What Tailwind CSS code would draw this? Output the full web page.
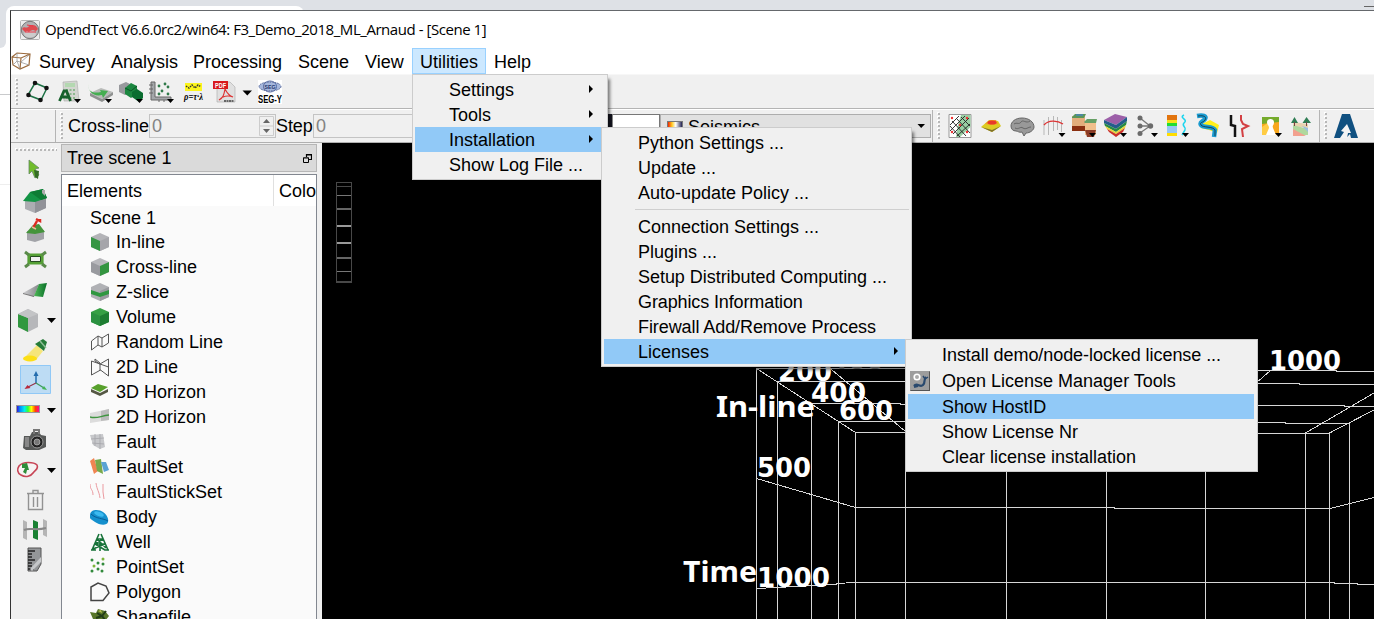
<!DOCTYPE html>
<html lang="en">
<head>
<meta charset="utf-8">
<title>OpendTect</title>
<script src="https://cdn.jsdelivr.net/npm/@tailwindcss/browser@4"></script>
</head>
<body class="w-[1374px] h-[619px] overflow-hidden bg-[#dee1e6] font-['Liberation_Sans',Arial,sans-serif] text-[18px] leading-[25px] text-black">
<svg class="absolute w-0 h-0">
  <defs>
    <pattern id="grip" width="4" height="4" patternUnits="userSpaceOnUse"><rect width="4" height="4" fill="#f0f0f0"/><rect x="0" y="0" width="2" height="2" fill="#fff"/><rect x="1" y="1" width="2" height="2" fill="#b8b8b8"/></pattern>
    <linearGradient id="rain"><stop offset="0" stop-color="#40c"/><stop offset=".15" stop-color="#08f"/><stop offset=".35" stop-color="#0ee"/><stop offset=".5" stop-color="#3f3"/><stop offset=".65" stop-color="#ff0"/><stop offset=".82" stop-color="#f40"/><stop offset="1" stop-color="#f0a"/></linearGradient>
    <linearGradient id="seis"><stop offset="0" stop-color="#e10"/><stop offset=".3" stop-color="#fc2"/><stop offset=".55" stop-color="#fff"/><stop offset="1" stop-color="#114"/></linearGradient>
    <linearGradient id="greens"><stop offset="0" stop-color="#50b858"/><stop offset="1" stop-color="#087028"/></linearGradient>
    <linearGradient id="grays"><stop offset="0" stop-color="#d0d0d2"/><stop offset="1" stop-color="#85868a"/></linearGradient>
  </defs>
</svg>

<div class="relative w-[1374px] h-[619px] overflow-hidden">
  <!-- browser behind the application window -->
  <div class="absolute left-0 top-[40px] w-[20px] h-[579px] bg-white"></div>
  <div class="absolute left-0 top-0 w-[6px] h-[48px] bg-[#dee1e6] rounded-br-lg"></div>
  <div class="absolute left-[6px] top-[6px] w-[298px] h-[60px] bg-white rounded-t-lg"></div>
  <div class="absolute left-0 top-[94px] w-[10px] h-px bg-[#c9cacc]"></div>
  <div class="absolute left-0 top-[184px] w-[10px] h-px bg-[#eee]"></div>
  <div class="absolute left-[1364px] top-[6px] w-[10px] h-px bg-[#666]"></div>

  <!-- application window -->
  <div class="absolute left-[10px] top-[10px] w-[1364px] h-[609px] border-l border-t border-l-[#333] border-t-[#65686c] bg-[#f0f0f0] flex flex-col">
    <!-- title bar -->
    <div class="h-[37px] shrink-0 bg-white flex items-center pl-[9px]">
      <svg class="w-5 h-5" viewBox="0 0 20 20"><rect x=".5" y=".5" width="19" height="19" rx="1" fill="#eee" stroke="#b5b5b5"/><circle cx="10" cy="10" r="8.700" fill="#b2b2b4" stroke="#777"/><ellipse cx="10" cy="14" rx="6" ry="3.500" fill="#ccc"/><path d="M2 9c2-4 4 0 6-2s5-3 8-1l2 3-2 2-3-1-3 1-1 1-2-1-2 1z" fill="#df4b50"/><path d="M5 12h11M7 5l6 1" stroke="#e34" fill="none"/></svg>
      <span class="ml-[5px] font-['Open_Sans','Noto_Sans',sans-serif] text-[15px] whitespace-nowrap tracking-[-0.45px]">OpendTect V6.6.0rc2/win64: F3_Demo_2018_ML_Arnaud - [Scene 1]</span>
    </div>
    <!-- menu bar -->
    <div class="h-[27px] shrink-0 bg-white flex items-stretch border-b border-[#f7f7f7] whitespace-nowrap">
      <svg class="w-[21px] h-[24px]" viewBox="0 0 21 24"><path d="M1 9 6 5l13 1-1 11-9 4-7-4zM1 9l9 1 9-4M10 10l-1 11" fill="none" stroke="#9b6a3c" stroke-width="1.200"/><path d="M6 5v8l3 8M6 13l-4 4M10 14l8-7M6 13l12 4" fill="none" stroke="#999" stroke-width=".8"/></svg>
      <span class="w-[72px] pl-[7px] pt-[2px]">Survey</span>
      <span class="w-[82px] pl-[7px] pt-[2px]">Analysis</span>
      <span class="w-[105px] pl-[7px] pt-[2px]">Processing</span>
      <span class="w-[67px] pl-[7px] pt-[2px]">Scene</span>
      <span class="w-[54px] pl-[7px] pt-[2px]">View</span>
      <span class="w-[74px] pl-[7px] pt-px bg-[#cce8ff] border border-[#99d1ff]">Utilities</span>
      <span class="pl-[8px] pt-[2px]">Help</span>
    </div>
    <!-- main toolbar -->
    <div class="h-[34px] shrink-0 flex items-center border-b border-[#b4b4b4]">
      <svg class="w-[11px] h-[28px] shrink-0"><rect x="4" y="0" width="4" height="28" fill="url(#grip)"/></svg>
      <svg class="w-[31px] h-[26px]" viewBox="0 0 31 26"><path d="m13 4 12 5-6 12-13-5z" fill="none" stroke="#1d7145" stroke-width="1.500"/><g fill="#111"><circle cx="13" cy="4" r="2.300"/><circle cx="24.500" cy="9" r="2.300"/><circle cx="18.500" cy="21" r="2.300"/><circle cx="6.500" cy="16" r="2.300"/></g></svg>
      <svg class="w-[31px] h-[26px]" viewBox="0 0 31 26"><path d="m10 3 14-1 2 20H11z" fill="#d3d6d0" stroke="#aaa" stroke-width=".6"/><path d="M12 4h10v4H12z" fill="#b4d8b1"/><path d="M13 11h10M13 15h10M13 19h10" stroke="#8cb88e" stroke-width="2.200" stroke-dasharray="2 1.500"/><path d="M6.500 22 11 12h2.500l4 10M9 18h7" fill="none" stroke="#16612c" stroke-width="2.800"/><path d="M21 20h7l-3.500 4z"/></svg>
      <svg class="w-[31px] h-[26px]" viewBox="0 0 31 26"><path d="m6 14 11-5 12 4-11 7z" fill="#b9bbb9"/><path d="m6 14 12 6v3L6 17zM18 20l11-7v3l-11 7z" fill="#8f9190"/><path d="M4 5c0 7 4 10 13 8l-1-2 8 1-5 7-1-3C9 18 4 12 4 5z" fill="#45ae51"/><path d="M21 20h7l-3.500 4z"/></svg>
      <svg class="w-[31px] h-[26px]" viewBox="0 0 31 26"><path d="m4 6 7-3 6 3v7l-7 3-6-3z" fill="#98999d"/><path d="m10 9 6-5 6 3v8l-6 4-6-4z" fill="#1b8740"/><path d="m17 13 5-3 6 4v5l-4 4-7-5z" fill="#0a6d30"/><path d="m10 9 6 3 6-5" stroke="#0a5524" fill="none"/><path d="M21 20h7l-3.500 4z"/></svg>
      <svg class="w-[31px] h-[26px]" viewBox="0 0 31 26"><path d="M5 3v18h20v-3H9V3z" fill="#a4a7aa" stroke="#666"/><path d="M3 6h4M3 10h4M3 14h4M13 21v2M18 21v2" stroke="#666"/><g fill="#307a4a"><circle cx="13" cy="7" r="1.400"/><circle cx="19" cy="5" r="1.400"/><circle cx="22" cy="8" r="1.400"/><circle cx="16" cy="12" r="1.400"/><circle cx="13" cy="15" r="1.400"/><circle cx="22" cy="15" r="1.400"/></g><path d="M21 20h7l-3.500 4z"/></svg>
      <svg class="w-[31px] h-[26px]" viewBox="0 0 31 26"><path d="M8 4h17v8H8z" fill="#fcf51c"/><path d="m9 7 3 2 3-3 3 3 3-3 3 2" stroke="#333" stroke-dasharray="1.500 1" fill="none" stroke-width="1.500"/><text x="7" y="21" font-family="Liberation Serif" font-weight="bold" font-style="italic" font-size="10" textLength="19" lengthAdjust="spacingAndGlyphs">ρ=τ·λ</text></svg>
      <svg class="w-[31px] h-[26px]" viewBox="0 0 31 26"><path d="M9 3h13l5 5v15H9z" fill="#e0e0e0" stroke="#aaa" stroke-width=".6"/><path d="M5 2h15v8H5z" fill="#d8191d"/><text x="7" y="8.500" font-size="6.500" font-weight="bold" font-family="Liberation Sans" fill="#fff" textLength="11" lengthAdjust="spacingAndGlyphs">PDF</text><path d="M17 10c-1 6-2 9-6 11 3-4 9-5 14-3-3-1-6-4-8-8z" fill="none" stroke="#d33" stroke-width="1.200"/><path d="M16 22h10" stroke="#666" stroke-width="2" stroke-dasharray="2 .5"/></svg>
      <svg class="w-[16px] h-[26px]" viewBox="0 0 16 26"><path d="M3.500 11.500h9.500l-4.700 5z"/></svg>
      <svg class="w-[31px] h-[26px]" viewBox="0 0 31 26"><path d="M3 1h24v24H3z" fill="#fff"/><ellipse cx="15" cy="7.500" rx="11" ry="4.500" fill="#a6b7dc" stroke="#46598f" stroke-dasharray="1.500 1"/><ellipse cx="15" cy="7.500" rx="6.500" ry="5.500" fill="none" stroke="#5468a0"/><text x="9.500" y="10" font-size="6" font-weight="bold" fill="#23366e" font-family="Liberation Sans" textLength="11" lengthAdjust="spacingAndGlyphs">SEG</text><text x="3" y="23.500" font-size="10.500" font-weight="bold" font-family="Liberation Sans" textLength="24" lengthAdjust="spacingAndGlyphs">SEG-Y</text></svg>
    </div>
    <!-- slice position, attribute and plugin toolbars -->
    <div class="h-[34px] shrink-0 flex items-center border-t border-t-white border-b border-b-[#b0b0b0] whitespace-nowrap">
      <svg class="w-[44px] h-[28px] shrink-0"><rect x="4" y="0" width="4" height="28" fill="url(#grip)"/></svg>
      <div class="w-px h-full bg-[#b4b4b4]"></div>
      <svg class="w-[12px] h-[28px] shrink-0"><rect x="4" y="0" width="4" height="28" fill="url(#grip)"/></svg>
      <span class="w-[81px] shrink-0">Cross-line</span>
      <div class="w-[127px] h-[24px] shrink-0 border border-[#c4c4c4] flex items-center pl-[2px] pt-px text-[#838383]">0
        <svg class="ml-auto -mt-px w-[16px] h-[22px]" viewBox="0 0 16 22"><path d="M.5 1.500h14v19H.5zM0 11h15" fill="none" stroke="#ccc"/><path d="M4 8h7l-3.500-4zM4 14h7l-3.500 4z" fill="#666"/></svg>
      </div>
      <span class="w-[37px] shrink-0 tracking-[-0.1px]">Step</span>
      <div class="w-[127px] h-[24px] shrink-0 border border-[#c4c4c4] flex items-center pl-[2px] pt-px text-[#838383]">0</div>
      <div class="ml-[168px] w-[5px] h-[24px] bg-[#14151f] border-r border-[#888]"></div>
      <div class="w-[47px] h-[24px] bg-white border-t border-r border-[#777]"></div>
      <div class="w-[271px] h-[24px] bg-[#e1e1e1] border border-[#adadad] flex items-center pl-[6px]">
        <svg class="w-[16px] h-[11px]"><rect x=".5" y=".5" width="15" height="10" fill="url(#seis)" stroke="#777"/></svg>
        <span class="pl-[5px] pt-[2px]">Seismics</span>
        <svg class="ml-auto w-[14px] h-[10px]" viewBox="0 0 14 10"><path d="M1.500 3H9L5.200 7z"/></svg>
      </div>
      <div class="w-px h-full ml-[1px] bg-[#b4b4b4]"></div>
      <svg class="w-[12px] h-[28px] shrink-0"><rect x="4" y="0" width="4" height="28" fill="url(#grip)"/></svg>
      <svg class="w-[31px] h-[26px]" viewBox="0 0 31 26"><path d="M4 1.500h22v23H4z" fill="#fff" stroke="#999"/><path d="m16 2 9.500 0v12L15 24h-4l2-12z" fill="#99cfa3"/><path d="m5 13 10 11M7 8l14 15M12 6l13 14M16 4l9 9M5 18 20 3M8 21 24 5M12 23 25 11M5 12l9-9" stroke="#222" stroke-width=".9"/><g fill="#e33"><circle cx="7" cy="5" r="1.200"/><circle cx="22" cy="5" r="1.200"/><circle cx="15" cy="12" r="1.200"/><circle cx="7" cy="19" r="1.200"/><circle cx="22" cy="19" r="1.200"/></g></svg>
      <svg class="w-[31px] h-[26px]" viewBox="0 0 31 26"><path d="m5 14 8-7 9 1 3 5-9 6z" fill="#dccd22"/><path d="m5 14 11 3 9-4-9 6z" fill="#80722a"/><path d="m9 11 5-4h6l2 4-6 1z" fill="#f29a25"/><ellipse cx="16" cy="9.500" rx="4.500" ry="2" fill="#e8392a"/></svg>
      <svg class="w-[31px] h-[26px]" viewBox="0 0 31 26"><path d="M4 13c0-4 4-8 11-8s12 4 12 9c0 3-4 6-8 6l-2 3-2-4c-3 1-4-1-6-1-3 0-5-2-5-5z" fill="#999" stroke="#666"/><path d="M7 11c3-2 5 1 7-2s5 2 9-1M8 15c4 2 5-2 8 0s5-1 8-1" stroke="#666" fill="none"/></svg>
      <svg class="w-[31px] h-[26px]" viewBox="0 0 31 26"><path d="M6 7v15M10.500 4v18M15.500 3v15M19.500 4v13M23.500 7v12" stroke="#b7b7b7"/><path d="M6 12c4-5 13-5 19-1" stroke="#d33" stroke-width="1.400" fill="none"/><path d="M20.500 20h7L24 24z"/></svg>
      <svg class="w-[31px] h-[26px]" viewBox="0 0 31 26"><path d="M3 3h13v15H3z" fill="#e2ad7b"/><path d="M3 4l3-3h11l-2 4H3z" fill="#5a9558"/><path d="M7 2h7" stroke="#4a84b8" stroke-width="1.500"/><path d="M3 13h13v5H3z" fill="#8a2f10"/><path d="M16 9h11v13H16z" fill="#f1bf8b"/><path d="m15 9 3-3h10l-1 4H16z" fill="#66a065"/><path d="M16 17h11l-2 7h-7z" fill="#8b3b26"/><path d="M20 20h7l-3.500 4z"/></svg>
      <svg class="w-[31px] h-[26px]" viewBox="0 0 31 26"><path d="M4 7 15 1l12 3-11 8z" fill="#9c5fa8"/><path d="m4 7 12 5 11-8v4l-11 8L4 10z" fill="#245c8c"/><path d="m4 10 12 6 11-8-1 4-10 7L5 13z" fill="#268a45"/><path d="m5 13 11 6 10-7-1 3-9 6L7 16z" fill="#e6d63b"/><path d="m7 16 9 5 9-6-2 4-7 5-7-5z" fill="#cb3029"/><path d="M20 20h7l-3.500 4z"/></svg>
      <svg class="w-[31px] h-[26px]" viewBox="0 0 31 26"><path d="m9 5 10 8-10 7M9 13h10" fill="none" stroke="#777" stroke-width="1.300"/><g fill="#6b6b6b"><circle cx="9" cy="5" r="2.500"/><circle cx="9" cy="13" r="2.500"/><circle cx="9" cy="20.500" r="2.500"/><circle cx="19.500" cy="13" r="2.700"/></g><path d="M20 20h7l-3.500 4z"/></svg>
      <svg class="w-[31px] h-[26px]" viewBox="0 0 31 26"><path d="M5 2h10v5H5z" fill="#e2740e"/><path d="M5 7h10v3H5z" fill="#f5e21a"/><path d="M5 10h10v3H5z" fill="#21dd32"/><path d="M5 13h10v7H5z" fill="#95c7f3"/><path d="M5 20h10v3H5z" fill="#fd0"/><path d="M22 2c-6 3 5 4 0 8-3 3 3 4 1 7l-3 5" stroke="#1cd5ee" stroke-width="1.500" fill="none"/><path d="M20 20h7l-3.500 4z"/></svg>
      <svg class="w-[31px] h-[26px]" viewBox="0 0 31 26"><path d="m7 12 10-5 9 5-2 8-8-3-8-2z" fill="#fff01c"/><path d="M4 3c6-1 10 0 8 3s-6 3-4 6 12 1 14 5l-1 7" fill="none" stroke="#1a9bd0" stroke-width="4.500"/><path d="M5 3c6-1 9 1 7 4s-6 2-4 5 12 1 14 5v6" fill="none" stroke="#154257"/></svg>
      <svg class="w-[31px] h-[26px]" viewBox="0 0 31 26"><path d="M7 2v10l4 1v11" fill="none" stroke="#111" stroke-width="2.500"/><path d="M17 2v5l2 4 5 2-6 3 1 8" fill="none" stroke="#d34043" stroke-width="2"/></svg>
      <svg class="w-[31px] h-[26px]" viewBox="0 0 31 26"><path d="M7 4h17v16H7z" fill="#75ab2c"/><path d="m7 11 17-2v13H7z" fill="#f7a71d"/><path d="M7 14 17 7v15H7z" fill="#fc4"/><path d="M12 9c0-4 7-4 7 0s-2 3-1 6l3 7H11l3-7c0-3-2-3-2-6z" fill="#fff"/><path d="M20 20h7l-3.500 4z"/></svg>
      <svg class="w-[31px] h-[26px]" viewBox="0 0 31 26"><path d="m7 9 15 2v4L7 13z" fill="#e8d3b0"/><path d="m7 12 15 4v6H7z" fill="#b0d89e"/><path d="m7 16 13 7H7z" fill="#f2a18f"/><path d="m16 13 6 2v4z" fill="#9bc0e0"/><path d="M8.500 4 5 10h7zM20.500 4l-4 6H25z" fill="#2f7d54"/><path d="M8.500 9v4M20.500 9v4" stroke="#744"/></svg>
      <div class="w-px h-full ml-[2px] bg-[#b4b4b4]"></div>
      <svg class="w-[12px] h-[28px] shrink-0"><rect x="3" y="0" width="4" height="28" fill="url(#grip)"/></svg>
      <svg class="w-[28px] h-[26px] shrink-0" viewBox="0 0 28 26"><path d="M2 25 10 1h8l8 24h-7l-1-4-3 3-7 1z" fill="#105080"/><path d="m15 11 4 9h-3l-1 5H8l4-6-3-1z" fill="#f4f4f4"/></svg>
    </div>

    <!-- work area -->
    <div class="flex-1 min-h-0 flex">
      <!-- scene tools -->
      <div class="w-[50px] shrink-0 flex flex-col pl-[4px] pt-px">
        <svg class="w-[42px] h-[11px] shrink-0"><rect x="0" y="4" width="42" height="4" fill="url(#grip)"/></svg>
        <svg class="w-[44px] h-[30px] shrink-0" viewBox="0 0 44 30"><path d="m14 5 10 8-4 1 4 6-4 3-3-7-3 3z" fill="#71bd2b" stroke="#686" stroke-width=".8"/><path d="m19 15 5 1-1 8-3-2z" fill="#356d24"/></svg>
        <svg class="w-[44px] h-[30px] shrink-0" viewBox="0 0 44 30"><path d="M10 14v10l10 4 11-5V12z" fill="#acadb2"/><path d="m20 16 11-4v11l-11 5z" fill="#919298"/><path d="m8 16 7-9 13-3 4 9-12 4z" fill="#149445"/><path d="m15 7 13-3 4 9-6 2z" fill="#0d7c34"/><path d="M27 5h3v6l-3-3z" fill="#aaa"/></svg>
        <svg class="w-[44px] h-[30px] shrink-0" viewBox="0 0 44 30"><path d="M12 16v9l8 2 9-3v-9z" fill="#a2a3a8"/><path d="m11 18 7-8 6-1 6 8-10 2z" fill="#44943b"/><path d="m18 13 4-7M21 4l4 2v-2" stroke="#dc2a20" stroke-width="2.500" fill="none"/><path d="m17 12 4 2" stroke="#eb9" stroke-width="1.500"/></svg>
        <svg class="w-[44px] h-[30px] shrink-0" viewBox="0 0 44 30"><path d="M14 10h13v8H14z" fill="#f0f0f0" stroke="#55a035" stroke-width="3.200"/><path d="m10 7 4 3M31 7l-4 3M10 22l4-3M31 22l-4-3" stroke="#5a8a4a" stroke-width="3"/><path d="M15.500 11.500h10v5h-10z" fill="none" stroke="#264d22"/></svg>
        <svg class="w-[44px] h-[30px] shrink-0" viewBox="0 0 44 30"><path d="M8 18 24 9l-5 13z" fill="url(#grays)"/><path d="m24 9 8-1-4 14-9-1z" fill="url(#greens)"/><path d="m8 18 11 3v1L8 19z" fill="#777"/></svg>
        <svg class="w-[44px] h-[30px] shrink-0" viewBox="0 0 44 30"><path d="m3 9 10-5 10 5v13l-10 5-10-5z" fill="#b6b7ba"/><path d="m3 9 10 4v14L3 22z" fill="#31983f"/><path d="m3 9 10-5 10 5-10 4z" fill="#c3c4c6"/><path d="M32 13h9l-4.500 5z"/></svg>
        <svg class="w-[44px] h-[30px] shrink-0" viewBox="0 0 44 30"><path d="m22 10 6 6-7 9-12-2z" fill="#f5e57b"/><ellipse cx="15" cy="23.500" rx="7" ry="3" fill="#fcdf17"/><path d="m20 9 8-5 4 3-3 9z" fill="#257b38"/><path d="m25 6 6 7" stroke="#8cbe95" stroke-width="1.500"/></svg>
        <svg class="w-[44px] h-[30px] shrink-0" viewBox="0 0 44 30"><path d="M5.500.5h30v28h-30z" fill="#bddcf4" stroke="#90c8f6"/><path d="M21 18V8" stroke="#236cad" stroke-width="1.500"/><path d="m18.500 11 2.500-5 2.500 5z" fill="#236cad"/><path d="m21 18-8 4" stroke="#963045" stroke-width="1.200"/><path d="m9.500 24 3-4 3 3z" fill="#b9283a"/><path d="m21 18 8 5" stroke="#3a9a5b" stroke-width="1.200"/><path d="m32 25-5-1 2-3z" fill="#43b557"/></svg>
        <svg class="w-[44px] h-[30px] shrink-0" viewBox="0 0 44 30"><rect x="1.500" y="10.500" width="23" height="7" fill="url(#rain)" stroke="#999"/><path d="M32 13h9l-4.500 5z"/></svg>
        <svg class="w-[44px] h-[30px] shrink-0" viewBox="0 0 44 30"><path d="M9 11h6l2-4h7l2 3 5 1v11l-7 3H11l-3-2z" fill="#575958"/><path d="M19 9V5h5v4" stroke="#777" fill="none" stroke-width="2"/><path d="M10 12h4v10h-4z" fill="#888"/><circle cx="22" cy="17" r="6" fill="#222" stroke="#999"/><circle cx="22" cy="17" r="3" fill="#777" stroke="#bbb" stroke-width=".7"/></svg>
        <svg class="w-[44px] h-[30px] shrink-0" viewBox="0 0 44 30"><path d="M4 11c4-5 15-4 18-1 2 4-2 5-4 8s-7 5-12 2c-4-2-4-6-2-9z" fill="#f6f3f3" stroke="#c74455" stroke-width="1.600"/><path d="m7 9 5-1 2 7-2 0-1 4-3-2 2-4-3-0z" fill="#2e8d39"/><path d="M32 13h9l-4.500 5z"/></svg>
        <svg class="w-[44px] h-[30px] shrink-0" viewBox="0 0 44 30"><path d="M13.500 9v15.500h14V9M12 8.500h17M18 8V5.500h5V8M18.500 12v10M22.500 12v10" fill="none" stroke="#929292" stroke-width="1.400"/></svg>
        <svg class="w-[44px] h-[30px] shrink-0" viewBox="0 0 44 30"><path d="m8 5 4 2v18l-4-2zM28 4l4 2v16l-4-2z" fill="#b5b5b5"/><path d="m18 5 5 2v18l-5-2z" fill="#198132"/><path d="M9 15c6-3 11 1 22-2" fill="none" stroke="#888" stroke-width="2"/></svg>
        <svg class="w-[44px] h-[30px] shrink-0" viewBox="0 0 44 30"><path d="M13 3h13v16l-4 7h-9z" fill="#949698" stroke="#555"/><path d="M13 6h7M13 9h4M13 12h4M13 15h7M13 18h4M13 21h4M13 24h6" stroke="#222" stroke-width="1.300"/><path d="m15 24 11-12v5l-9 9z" fill="#c5c7c9"/></svg>
      </div>

      <!-- tree -->
      <div class="w-[261px] shrink-0 flex flex-col pt-px">
        <div class="w-[256px] h-[28px] shrink-0 bg-[#dadada] border border-[#b6b6b6] flex items-center pl-[5px] pr-[4px] pt-px">Tree scene 1
          <svg class="ml-auto w-[9px] h-[10px]" viewBox="0 0 9 10"><path d="M3.500 3V.5h5v5H6M3 1h6M0 4h6" fill="none" stroke="#000" stroke-width="1.200"/><path d="M.5 4h5v4.500h-5z" fill="#ddd" stroke="#000"/></svg>
        </div>
        <div class="mt-[2px] w-[256px] flex-1 min-h-0 overflow-hidden border border-b-0 border-[#828790] bg-[#fafafa] whitespace-nowrap">
          <div class="h-[31px] bg-white flex items-center">
            <span class="w-[211px] pl-[5px] pt-[2px]">Elements</span>
            <span class="flex-1 h-full border-l border-[#e0e0e0] pl-[5px] leading-[33px] overflow-hidden">Color</span>
          </div>
          <div class="pl-[28px] h-[23px] leading-[24px]">Scene 1</div>
          <div class="[&>div]:h-[25px] [&>div]:flex [&>div]:items-center [&>div]:gap-[6px] [&>div]:pl-[28px] [&>div]:pt-[2px] [&_svg]:-mt-[2px]">
            <div><svg class="w-5 h-5" viewBox="0 0 20 20"><path d="m1 5 9-4 9 4v10l-9 4-9-4z" fill="#b3b3b7"/><path d="m1 5 9 4v10l-9-4z" fill="#359643"/><path d="m10 9 9-4v10l-9 4z" fill="#a5a5aa"/></svg>In-line</div>
            <div><svg class="w-5 h-5" viewBox="0 0 20 20"><path d="m1 5 9-4 9 4v10l-9 4-9-4z" fill="#b8b8bc"/><path d="m1 5 9 4v10l-9-4z" fill="#999a9f"/><path d="m10 9 9-4v10l-9 4z" fill="#349540"/></svg>Cross-line</div>
            <div><svg class="w-5 h-5" viewBox="0 0 20 20"><path d="m1 5 9-4 9 4v10l-9 4-9-4z" fill="#b0b1b5"/><path d="m10 9 9-4v10l-9 4z" fill="#999a9f"/><path d="m1 8 9 3 9-3v4l-9 3-9-3z" fill="#2f9740"/></svg>Z-slice</div>
            <div><svg class="w-5 h-5" viewBox="0 0 20 20"><path d="m1 5 9-4 9 4v10l-9 4-9-4z" fill="#36a044"/><path d="m10 9 9-4v10l-9 4z" fill="#1d7d31"/><path d="m1 5 9 4v10l-9-4z" fill="#2b9140"/></svg>Volume</div>
            <div><svg class="w-5 h-5" viewBox="0 0 20 20"><path d="M1.500 9 8 4l4 2 6.500-4v9L12 15l-4-2-6.500 5zM8 4v9M12 6v9" fill="none" stroke="#555"/></svg>Random Line</div>
            <div><svg class="w-5 h-5" viewBox="0 0 20 20"><path d="m1.500 4 17 6v9l-8-6-9 5zM10 7l8.500-5v9M5 4l5 3v7M5 4V2l5 4" fill="none" stroke="#555"/></svg>2D Line</div>
            <div><svg class="w-5 h-5" viewBox="0 0 20 20"><path d="m1 7 9 4 8-4v3l-8 4-9-4z" fill="#555744"/><path d="m1 6 7-4 10 3-8 5z" fill="#57a02c"/></svg>3D Horizon</div>
            <div><svg class="w-5 h-5" viewBox="0 0 20 20"><path d="m0 6 19-4v11L0 16z" fill="#dcdcdc"/><path d="m11 4 8-2v11l-8 1z" fill="#bcbcbc"/><path d="M0 10c7 2 10-1 19-2" fill="none" stroke="#409541" stroke-width="1.400"/></svg>2D Horizon</div>
            <div><svg class="w-5 h-5" viewBox="0 0 20 20"><path d="m0 3 13-1 2 13-5 2-7-4z" fill="#c7c8cb"/><path d="M5 2v12M10 2v15M1 7l13-1M2 11l12 1" stroke="#a5a5aa" stroke-width=".8"/></svg>Fault</div>
            <div><svg class="w-5 h-5" viewBox="0 0 20 20"><path d="m0 4 4-3 4 13-4 3z" fill="#f08552"/><path d="m5 3 6-1 2 15-6-3z" fill="#78a94b"/><path d="m11 5 5 0 3 8-5 2z" fill="#5aa2d4"/></svg>FaultSet</div>
            <div><svg class="w-5 h-5" viewBox="0 0 20 20"><path d="M0 2c0 6 3 5 3 11M6 1c1 7 3 8 4 15M13 2v8l1 7" fill="none" stroke="#eb9aa0"/></svg>FaultStickSet</div>
            <div><svg class="w-5 h-5" viewBox="0 0 20 20"><path d="M0 8c1-7 10-5 13-3s6 6 5 10-9 3-13 0-6-3-5-7z" fill="#1590cd"/><path d="M1 7c5 5 12 4 17 7" stroke="#085e99" fill="none"/><ellipse cx="9" cy="7" rx="5" ry="2" transform="rotate(20 9 7)" fill="#3cbaf0"/></svg>Body</div>
            <div><svg class="w-5 h-5" viewBox="0 0 20 20"><path d="M9 2 2 18M11 2l7 16M7 7h6M5 12h10l-12 5M7 7l9 9M13 7 5 12l10 6M10 10v9M1 18h5M14 18h5" fill="none" stroke="#18733a" stroke-width="1.600"/></svg>Well</div>
            <div><svg class="w-5 h-5" viewBox="0 0 20 20"><g fill="#318a3c"><circle cx="2" cy="3" r="1.500"/><circle cx="8" cy="6" r="1.500"/><circle cx="13" cy="2" r="1.500" fill="#7bb53a"/><circle cx="13" cy="7" r="1.500"/><circle cx="4" cy="9" r="1.500" fill="#7bb53a"/><circle cx="8" cy="12" r="1.500"/><circle cx="2" cy="14" r="1.500"/><circle cx="12" cy="14" r="1.500"/></g></svg>PointSet</div>
            <div><svg class="w-5 h-5" viewBox="0 0 20 20"><path d="M1 18.500V5L8 1l8 3 3 7-6 7.500z" fill="none" stroke="#444" stroke-width="1.500"/></svg>Polygon</div>
            <div><svg class="w-5 h-5" viewBox="0 0 20 20"><path d="m0 5 6 1 2-4 7 2 4 5-4 5-6 3-6-5z" fill="#587628"/><path d="m7 6 5 3 4-5M6 11l6-2 3 4" stroke="#223d17" stroke-width="2" fill="none"/><path d="m8 4 3-1 1 3" fill="#bcc34e"/></svg>Shapefile</div>
          </div>
        </div>
      </div>

      <!-- 3D scene -->
      <svg class="w-[1052px] h-[476px] shrink-0 bg-black" viewBox="322 143 1052 476">
        <g fill="none" stroke="#484848" shape-rendering="crispEdges">
          <path d="M336.500 182.500h15v100h-15zM337 186.500h14M337 281.500h14"/>
          <path stroke="#777" d="M337 195.500h14M337 271.500h14"/>
          <path stroke="#666" stroke-width="2" d="M337 209h14M337 258h14"/>
          <path stroke="#999" stroke-width="2" d="M337 225.500h14M337 242.500h14"/>
        </g>
        <g fill="none" stroke="#d6d6d6" stroke-width="1" shape-rendering="crispEdges">
          <path d="M756.500 368v251M777.500 381v238M811.500 403v216M838.500 421v198M855.500 432v187M905.500 432v187M1006.500 433v186M1106.500 433v186M1205.500 433v186M1305.500 433v186M1329.500 433v186M1349.500 423v196"/>
          <path d="M756.500 368.500H905M1258 370.500h78v1h38M777 381.500H905M1258 383.500h41v1h75M811 403.500h89v1h5M1258 405.500h86v1h30M838 421.500h67M1258 422.500h27v1h64M855 432.500h50M1258 433.500h71"/>
          <path d="m756.500 368.500 99 64M831.500 369.500l74 62M1258.500 381 1271 370M1305.500 433l68.500-40M1329.500 433l44.500-23"/>
          <path d="m756.500 478.500 99 29H1114v1h216l44-11M756.500 588.500l79.500-4v-1l19.500-1H1334v1h23v1h17"/>
        </g>
        <g fill="#fff" font-family="DejaVu Sans, Verdana, sans-serif" font-weight="bold" font-size="27">
          <text x="830" y="369" textLength="54" lengthAdjust="spacingAndGlyphs" fill="#888">400</text>
          <text x="778" y="380.500" textLength="54" lengthAdjust="spacingAndGlyphs">200</text>
          <text x="811" y="402" textLength="55" lengthAdjust="spacingAndGlyphs">400</text>
          <text x="839" y="420" textLength="54" lengthAdjust="spacingAndGlyphs">600</text>
          <text x="716" y="416.500" font-size="28" font-family="Noto Sans, sans-serif" textLength="99" lengthAdjust="spacingAndGlyphs">In-line</text>
          <text x="757" y="477" textLength="54" lengthAdjust="spacingAndGlyphs">500</text>
          <text x="683" y="582" font-size="28" font-family="Noto Sans, sans-serif" textLength="74" lengthAdjust="spacingAndGlyphs">Time</text>
          <text x="757" y="587" textLength="73" lengthAdjust="spacingAndGlyphs">1000</text>
          <text x="1269" y="369.500" textLength="72" lengthAdjust="spacingAndGlyphs">1000</text>
        </g>
      </svg>
    </div>
  </div>

  <!-- Utilities menu -->
  <div class="absolute left-[412px] top-[74px] w-[196px] h-[106px] bg-[#f0f0f0] border border-[#ccc] p-[2px] shadow-[3px_4px_3px_-1px_rgba(0,0,0,0.5)] whitespace-nowrap leading-[27px] [&_svg]:-mt-[3px]">
    <div class="h-[25px] pl-[34px] pr-[11px] pt-[2px] flex items-center justify-between">Settings<svg class="w-[5px] h-[8px]" viewBox="0 0 5 8"><path d="M0 0l4 4-4 4z"/></svg></div>
    <div class="h-[25px] pl-[34px] pr-[11px] pt-[2px] flex items-center justify-between">Tools<svg class="w-[5px] h-[8px]" viewBox="0 0 5 8"><path d="M0 0l4 4-4 4z"/></svg></div>
    <div class="h-[25px] pl-[34px] pr-[11px] pt-[2px] flex items-center justify-between bg-[#91c9f7]">Installation<svg class="w-[5px] h-[8px]" viewBox="0 0 5 8"><path d="M0 0l4 4-4 4z"/></svg></div>
    <div class="h-[25px] pl-[34px]">Show Log File ...</div>
  </div>

  <!-- Installation menu -->
  <div class="absolute left-[601px] top-[127px] w-[311px] h-[240px] bg-[#f0f0f0] border border-[#ccc] p-[2px] shadow-[3px_4px_3px_-1px_rgba(0,0,0,0.5)] whitespace-nowrap leading-[27px] [&_svg]:-mt-[3px]">
    <div class="h-[25px] pl-[34px]">Python Settings ...</div>
    <div class="h-[25px] pl-[34px]">Update ...</div>
    <div class="h-[25px] pl-[34px]">Auto-update Policy ...</div>
    <div class="h-px mt-[4px] mb-[4px] ml-[31px] bg-[#cfcfcf]"></div>
    <div class="h-[25px] pl-[34px]">Connection Settings ...</div>
    <div class="h-[25px] pl-[34px]">Plugins ...</div>
    <div class="h-[25px] pl-[34px] tracking-[-0.04px]">Setup Distributed Computing ...</div>
    <div class="h-[25px] pl-[34px] tracking-[-0.12px]">Graphics Information</div>
    <div class="h-[25px] pl-[34px] tracking-[-0.08px]">Firewall Add/Remove Process</div>
    <div class="h-[25px] pl-[34px] pr-[10px] pt-[2px] flex items-center justify-between bg-[#91c9f7]">Licenses<svg class="w-[5px] h-[8px]" viewBox="0 0 5 8"><path d="M0 0l4 4-4 4z"/></svg></div>
  </div>

  <!-- Licenses menu -->
  <div class="absolute left-[905px] top-[339px] w-[353px] h-[133px] bg-[#f0f0f0] border border-[#ccc] py-[2px] pl-[2px] pr-[3px] whitespace-nowrap leading-[27px]">
    <div class="h-[25px] pl-[34px] tracking-[-0.06px]">Install demo/node-locked license ...</div>
    <div class="h-[27px] pl-[2px] pt-[2px] flex items-center"><svg class="w-5 h-5 mr-[12px] -mt-[1px]" viewBox="0 0 20 20"><path d="M0 0h20v20H0z" fill="#9d9d9d"/><path d="M0 20h20V0l-1 1v18H1z" fill="#555"/><circle cx="7" cy="6" r="2.800" fill="#aaa" stroke="#fff" stroke-width="1.600"/><path d="M4 15c3-4 6 2 9-1s0-5 3-8M4 16l4-1" stroke="#29496e" stroke-width="2.200" fill="none"/><path d="m13 5 2 3 3-2" stroke="#29496e" stroke-width="1.500" fill="none"/></svg>Open License Manager Tools</div>
    <div class="h-[25px] pl-[34px] bg-[#91c9f7] tracking-[-0.08px]">Show HostID</div>
    <div class="h-[25px] pl-[34px]">Show License Nr</div>
    <div class="h-[25px] pl-[34px]">Clear license installation</div>
  </div>
</div>
</body>
</html>
